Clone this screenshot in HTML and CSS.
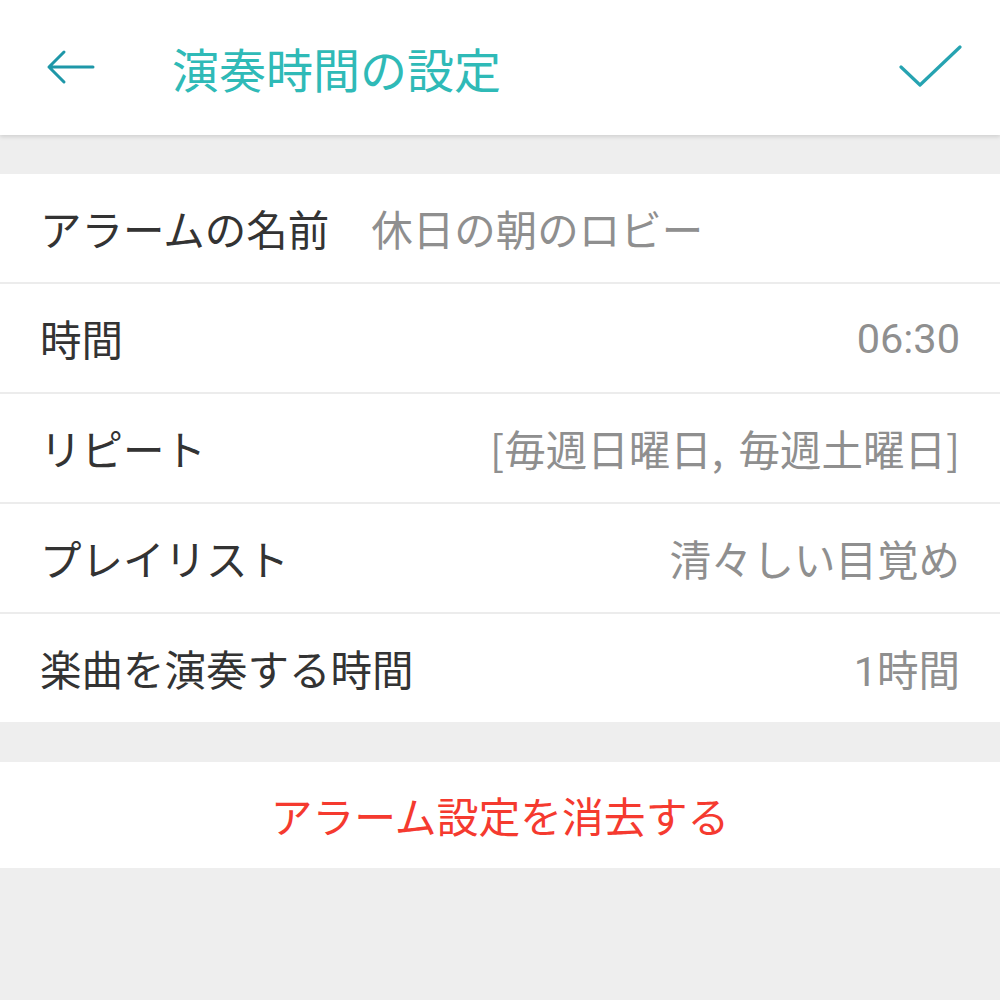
FILE: index.html
```html
<!DOCTYPE html>
<html lang="ja">
  <head>
    <meta charset="utf-8">
    <title>演奏時間の設定</title>
    <link rel="stylesheet" href="styles.css">
  </head>
  <body>
    <header class="toolbar">
      <div class="nav-back">
        <svg width="52" height="40" viewBox="0 0 52 40">
          <path d="M47 18 H3 M18 3 L3 18 L18 33" fill="none" stroke="#1e97a8" stroke-width="3" stroke-linecap="round" stroke-linejoin="round"/>
        </svg>
      </div>
      <h1 class="title">演奏時間の設定</h1>
      <div class="nav-done">
        <svg width="66" height="46" viewBox="0 0 66 46">
          <path d="M3 22 L22 40 L62 2" fill="none" stroke="#26a3b1" stroke-width="3.2" stroke-linecap="round" stroke-linejoin="round"/>
        </svg>
      </div>
    </header>

    <ul class="settings">
      <li class="row">
        <span class="label">アラームの名前</span>
        <span class="value inline">休日の朝のロビー</span>
      </li>
      <li class="row">
        <span class="label">時間</span>
        <span class="value num">06:30</span>
      </li>
      <li class="row">
        <span class="label">リピート</span>
        <span class="value days">[毎週日曜日, 毎週土曜日]</span>
      </li>
      <li class="row">
        <span class="label">プレイリスト</span>
        <span class="value">清々しい目覚め</span>
      </li>
      <li class="row">
        <span class="label">楽曲を演奏する時間</span>
        <span class="value num">1時間</span>
      </li>
    </ul>

    <div class="danger">
      <button class="delete">アラーム設定を消去する</button>
    </div>
  </body>
</html>
```

FILE: styles.css
```css
body {
  margin: 0;
  background-color: #eeeeee;
  font-family: "Noto Sans CJK JP", sans-serif;
  color: #333333;
}

.toolbar {
  height: 135px;
  background-color: #ffffff;
  box-shadow: 0 2px 4px rgba(0, 0, 0, 0.12);
  display: flex;
  align-items: center;
  position: relative;
}

.nav-back {
  width: 172px;
  padding-left: 46px;
  box-sizing: border-box;
  display: flex;
  align-items: center;
  margin-top: 2px;
}

.title {
  flex: 1;
  margin: 0;
  font-size: 47px;
  font-weight: 400;
  color: #2fbab7;
}

.nav-done {
  padding-right: 36px;
  margin-top: 6px;
}

.settings {
  list-style: none;
  margin: 39px 0 0;
  padding: 0;
  background-color: #ffffff;
}

.row {
  height: 108px;
  display: flex;
  align-items: center;
  padding: 0 40px;
  font-size: 41.5px;
  border-bottom: 2px solid #ececec;
}

.row:last-child {
  border-bottom: 0;
}

.label {
  color: #333333;
}

.value {
  margin-left: auto;
  color: #8f8f8f;
}

.value.num {
  font-family: Roboto, "Noto Sans CJK JP", sans-serif;
}

.value.days {
  word-spacing: 6px;
}

.value.inline {
  margin-left: 42px;
}

.danger {
  margin-top: 40px;
  background-color: #ffffff;
}

.delete {
  display: block;
  width: 100%;
  height: 106px;
  border: 0;
  background: none;
  font-family: "Noto Sans CJK JP", sans-serif;
  font-size: 41.8px;
  color: #f53a2f;
  padding: 0;
}
```
